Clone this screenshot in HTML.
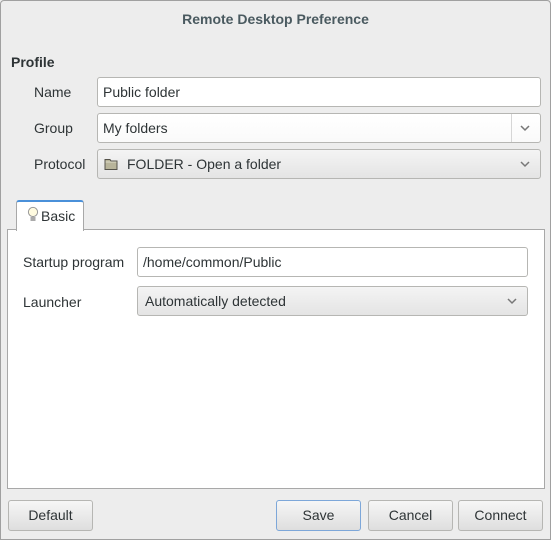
<!DOCTYPE html>
<html><head><style>
*{box-sizing:border-box;margin:0;padding:0}
body{width:551px;height:540px;background:#ededed;font-family:"Liberation Sans",sans-serif;font-size:14px;color:#2e3436;position:relative;overflow:hidden}
.win{position:absolute;left:0;top:0;width:551px;height:540px;border:1px solid #a0a0a0;border-radius:4px 4px 0 0}
.abs{position:absolute}
.title{left:0;width:551px;top:11px;text-align:center;font-weight:bold;color:#4a5a60;font-size:14px}
.lbl{position:absolute}
.entry{position:absolute;background:#fff;border:1px solid #b6b6b3;border-radius:3px;padding-left:5px;line-height:28px}
.combo{position:absolute;background:linear-gradient(#f4f4f4,#e4e4e4);border:1px solid #b6b6b3;border-radius:3px;padding-left:5px;line-height:28px}
.chev{position:absolute;right:9px;top:10px;width:12px;height:8px}
.btn{position:absolute;top:500px;height:31px;background:linear-gradient(#f6f6f6,#dedede);border:1px solid #b6b6b3;border-radius:3px;text-align:center;line-height:29px}
</style></head><body>
<div class="win"></div>
<div class="abs title">Remote Desktop Preference</div>
<div class="lbl" style="left:11px;top:54px;font-weight:bold">Profile</div>
<div class="lbl" style="left:34px;top:84px">Name</div>
<div class="lbl" style="left:34px;top:120px">Group</div>
<div class="lbl" style="left:34px;top:156px">Protocol</div>
<div class="entry" style="left:97px;top:77px;width:444px;height:30px">Public folder</div>
<div class="entry" style="left:97px;top:113px;width:444px;height:30px;background:linear-gradient(#fff,#fafafa)">My folders
<div style="position:absolute;left:413px;top:0;width:1px;height:28px;background:#d6d6d6"></div>
<svg class="chev" viewBox="0 0 12 8"><path d="M2 2l4 4 4-4" fill="none" stroke="#777" stroke-width="1.5"/></svg></div>
<div class="combo" style="left:97px;top:149px;width:444px;height:30px"><svg style="position:absolute;left:6px;top:7px" width="14" height="14" viewBox="0 0 14 14"><path d="M1 2.5h5l1 1.5h6v8.5H1z" fill="#b8b49a" stroke="#55524a"/><path d="M1.5 5h11" stroke="#dedcc8"/></svg><span style="margin-left:24px">FOLDER - Open a folder</span>
<svg class="chev" viewBox="0 0 12 8"><path d="M2 2l4 4 4-4" fill="none" stroke="#777" stroke-width="1.5"/></svg></div>
<div class="abs" style="left:7px;top:229px;width:538px;height:260px;background:#fff;border:1px solid #a8a8a8"></div>
<div class="abs" style="left:16px;top:200px;width:68px;height:31px;background:#fff;border:1px solid #a8a8a8;border-top:2px solid #4a90d9;border-bottom:none;border-radius:3px 3px 0 0"></div>
<svg class="abs" style="left:27px;top:206px" width="12" height="18" viewBox="0 0 12 18"><circle cx="6" cy="6" r="4.6" fill="#fffbe0" stroke="#999"/><rect x="3.5" y="11" width="5" height="4" fill="#aaa"/></svg>
<div class="lbl" style="left:41px;top:208px">Basic</div>
<div class="lbl" style="left:23px;top:254px">Startup program</div>
<div class="lbl" style="left:23px;top:294px">Launcher</div>
<div class="entry" style="left:137px;top:247px;width:391px;height:30px">/home/common/Public</div>
<div class="combo" style="left:137px;top:286px;width:391px;height:30px;padding-left:7px">Automatically detected
<svg class="chev" viewBox="0 0 12 8"><path d="M2 2l4 4 4-4" fill="none" stroke="#777" stroke-width="1.5"/></svg></div>
<div class="btn" style="left:8px;width:85px">Default</div>
<div class="btn" style="left:276px;width:85px;border-color:#7da7d9">Save</div>
<div class="btn" style="left:368px;width:85px">Cancel</div>
<div class="btn" style="left:458px;width:85px">Connect</div>
</body></html>
